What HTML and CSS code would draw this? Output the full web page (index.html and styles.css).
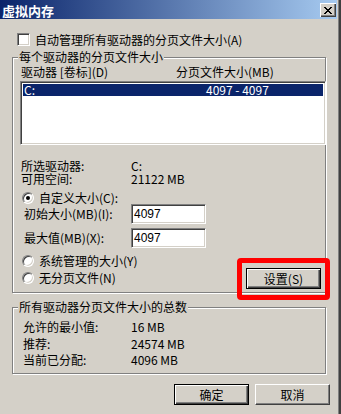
FILE: index.html
```html
<!DOCTYPE html>
<html lang="zh-CN">
<head>
<meta charset="UTF-8" />
<meta name="viewport" content="width=device-width, initial-scale=1.0" />
<title>虚拟内存</title>
<link rel="stylesheet" href="styles.css">
</head>
<body>

<div class="window">
  <div class="titlebar">
    <span class="title">虚拟内存</span>
    <span class="close">
      <svg width="8" height="7" viewBox="0 0 8 7"><path d="M0 0h2v1H0z M6 0h2v1H6z M1 1h2v1H1z M5 1h2v1H5z M2 2h4v1H2z M3 3h2v1H3z M2 4h4v1H2z M1 5h2v1H1z M5 5h2v1H5z M0 6h2v1H0z M6 6h2v1H6z" fill="#000"/></svg>
    </span>
  </div>

  <div class="check-row">
    <span class="checkbox"></span>
    <span class="check-label">自动管理所有驱动器的分页文件大小(A)</span>
  </div>

  <fieldset class="group group-drives">
    <legend>每个驱动器的分页文件大小</legend>
    <div class="group-body">
      <div class="list-head">
        <span class="col-drive">驱动器 [卷标](D)</span>
        <span>分页文件大小(MB)</span>
      </div>
      <div class="list">
        <div class="list-row selected">
          <span class="col-name">C:</span>
          <span class="col-size">4097 - 4097</span>
        </div>
      </div>

      <div class="info">
        <div class="info-row"><span class="info-label">所选驱动器:</span><span>C:</span></div>
        <div class="info-row"><span class="info-label">可用空间:</span><span>21122 MB</span></div>
      </div>

      <div class="radio-row first">
        <span class="radio checked"></span>
        <span>自定义大小(C):</span>
      </div>
      <div class="field-row">
        <span class="field-label">初始大小(MB)(I):</span>
        <span class="input">4097</span>
      </div>
      <div class="field-row second">
        <span class="field-label">最大值(MB)(X):</span>
        <span class="input">4097</span>
      </div>

      <div class="bottom">
        <div class="bottom-radios">
          <div class="radio-row">
            <span class="radio"></span>
            <span>系统管理的大小(Y)</span>
          </div>
          <div class="radio-row lower">
            <span class="radio"></span>
            <span>无分页文件(N)</span>
          </div>
        </div>
        <div class="set-wrap">
          <button class="btn default">设置(S)</button>
          <span class="highlight"></span>
        </div>
      </div>
    </div>
  </fieldset>

  <fieldset class="group group-total">
    <legend>所有驱动器分页文件大小的总数</legend>
    <div class="total-body">
      <div class="total-row"><span class="total-label">允许的最小值:</span><span>16 MB</span></div>
      <div class="total-row"><span class="total-label">推荐:</span><span>24574 MB</span></div>
      <div class="total-row last"><span class="total-label">当前已分配:</span><span>4096 MB</span></div>
    </div>
  </fieldset>

  <div class="actions">
    <button class="btn default">确定</button>
    <button class="btn">取消</button>
  </div>
</div>

</body>
</html>
```

FILE: styles.css
```css
body { margin: 0; background-color: #d4d0c8; font-family: "Noto Sans CJK SC", "Liberation Sans", sans-serif; font-size: 12px; line-height: 12px; color: #000; overflow: hidden; }
.window {
  width: 341px; height: 414px; box-sizing: border-box; background-color: #d4d0c8;
  border-right: 2px solid #404040; padding-right: 2px; box-shadow: inset -1px 0 #808080;
}

/* title bar */
.titlebar { height: 19px; display: flex; align-items: center; justify-content: space-between; background: linear-gradient(to right, #0a246a, #a6caf0); }
.title { color: #fff; font-weight: bold; font-size: 13px; line-height: 13px; padding-left: 2px; margin-top: 2px; }
.close {
  width: 16px; height: 14px; margin-right: 1px; margin-top: 1px; box-sizing: border-box; background-color: #d4d0c8;
  display: flex; align-items: center; justify-content: center; padding-right: 1px;
  box-shadow: inset 1px 1px #fff, inset -1px -1px #404040, inset -2px -2px #808080;
}
.close svg { display: block; }

/* sunken boxes */
.checkbox, .list, .input, .radio {
  background-color: #fff; border: 1px solid; border-color: #808080 #fff #fff #808080;
  box-shadow: inset 1px 1px #404040, inset -1px -1px #d4d0c8; box-sizing: border-box;
}

.check-row { display: flex; align-items: center; height: 13px; margin: 14px 0 0 17px; }
.checkbox { width: 13px; height: 13px; margin-right: 5px; }

/* group boxes */
.group {
  margin: 5px 0 0 12px; padding: 0; width: 314px; min-width: 0; box-sizing: border-box;
  border: 1px solid #808080; box-shadow: inset 1px 1px #fff, 1px 1px #fff;
}
.group legend { margin-left: 5px; padding: 0 1px; line-height: 12px; background-color: #d4d0c8; }
.group-total { margin-top: 8px; }

.group-body { padding: 3px 0 3px 8px; }
.list-head { display: flex; height: 12px; }
.col-drive { width: 155px; }
.list { width: 306px; height: 64px; margin: 3px 0 0 -1px; padding: 2px 2px; }
.list-row { display: flex; height: 12px; padding-left: 1px; white-space: pre; }
.list-row.selected { background-color: #0a246a; color: #fff; }
.col-name { width: 182px; }

.info { margin-top: 15px; }
.info-row { display: flex; height: 12px; }
.info-row + .info-row { margin-top: 1px; }
.info-label { width: 110px; }

.radio-row { display: flex; align-items: center; height: 12px; margin-left: 1px; }
.radio-row.first { margin-top: 7px; }
.radio-row.lower { margin-top: 5px; }
.radio { width: 12px; height: 12px; border-radius: 50%; margin-right: 5px; position: relative; }
.radio.checked::after { content: ""; position: absolute; left: 3px; top: 3px; width: 4px; height: 4px; border-radius: 50%; background-color: #000; }

.field-row { display: flex; align-items: center; height: 20px; margin-left: 3px; }
.field-row.second { margin-top: 4px; }
.field-label { width: 107px; }
.input { width: 75px; height: 20px; padding: 0 0 0 2px; font-family: "Liberation Sans", sans-serif; font-size: 12px; line-height: 18px; }

.bottom { display: flex; margin-top: 7px; }
.bottom-radios { flex: 1; }
.set-wrap { position: relative; margin: 13px 4px 0 0; }
.highlight {
  position: absolute; left: -9px; top: -10px; width: 93px; height: 42px; box-sizing: border-box;
  border: 5px solid #f00; border-radius: 4px;
}

.total-body { padding: 8px 0 7px 10px; }
.total-row { display: flex; height: 12px; }
.total-row + .total-row { margin-top: 5px; }
.total-row.last { margin-top: 4px; }
.total-label { width: 108px; }

/* buttons */
.btn {
  width: 75px; height: 21px; margin: 0; padding: 0; box-sizing: border-box; background-color: #d4d0c8;
  font-family: inherit; font-size: 12px; line-height: 12px; color: #000;
  border: 1px solid; border-color: #fff #404040 #404040 #fff; box-shadow: inset -1px -1px #808080;
}
.btn.default { border-color: #000; box-shadow: inset 1px 1px #fff, inset -1px -1px #404040, inset -2px -2px #808080; }
.actions { display: flex; justify-content: flex-end; gap: 6px; padding-right: 7px; margin-top: 10px; }
```
